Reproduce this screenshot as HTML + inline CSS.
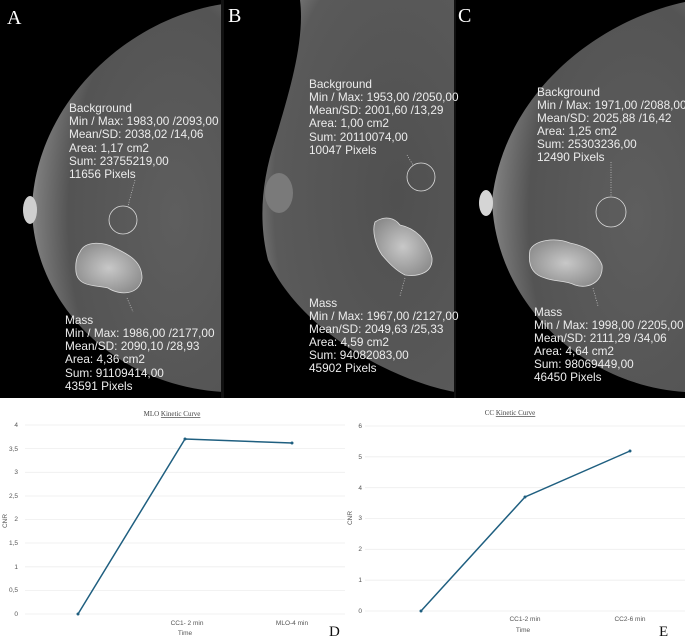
<!DOCTYPE html>
<html><head><meta charset="utf-8"><style>
html,body{margin:0;padding:0;background:#fff;width:685px;height:639px;overflow:hidden}
svg{display:block}
.t{font-family:"Liberation Sans",sans-serif;font-size:11.8px;fill:#ececec}
.ax{font-family:"Liberation Sans",sans-serif;font-size:6.5px;fill:#555}
.sr{font-family:"Liberation Serif",serif}
</style></head><body>
<svg width="685" height="639" viewBox="0 0 685 639" xmlns="http://www.w3.org/2000/svg">
<defs>
<radialGradient id="gA" cx="0.75" cy="0.55" r="0.8"><stop offset="0" stop-color="#5e5e5e"/><stop offset="0.7" stop-color="#545454"/><stop offset="0.9" stop-color="#7a7a7a"/><stop offset="1" stop-color="#a0a0a0"/></radialGradient>
<radialGradient id="gB" cx="0.7" cy="0.5" r="0.8"><stop offset="0" stop-color="#505050"/><stop offset="0.8" stop-color="#5a5a5a"/><stop offset="1" stop-color="#8a8a8a"/></radialGradient>
<radialGradient id="gM" cx="0.5" cy="0.5" r="0.6"><stop offset="0" stop-color="#c8c8c8"/><stop offset="1" stop-color="#8a8a8a"/></radialGradient>
</defs>
<rect x="0" y="0" width="685" height="398" fill="#000"/>
<!-- A -->
<path d="M223,4 C120,20 34,110 32,210 C34,300 110,385 223,392 Z" fill="url(#gA)"/>
<ellipse cx="30" cy="210" rx="7" ry="14" fill="#cfcfcf"/>
<rect x="221" y="0" width="3" height="398" fill="#111"/>
<!-- B -->
<path d="M300,0 L455,0 L455,392 C390,380 300,330 268,260 C258,220 262,180 275,140 C290,90 305,40 300,0 Z" fill="url(#gB)"/>
<ellipse cx="279" cy="193" rx="14" ry="20" fill="#7a7a7a"/>
<rect x="454" y="0" width="2" height="398" fill="#111"/>
<!-- C -->
<path d="M685,2 C600,20 505,90 492,200 C495,300 580,385 685,392 Z" fill="url(#gA)"/>
<ellipse cx="486" cy="203" rx="7" ry="13" fill="#d5d5d5"/>
<!-- ROIs -->
<g fill="none" stroke="#ddd" stroke-width="0.8">
<circle cx="123" cy="220" r="14"/>
<path d="M80,252 C85,240 105,242 115,248 C130,255 142,262 142,278 C140,295 120,296 108,288 C95,285 78,287 76,272 C75,262 77,256 80,252 Z" fill="url(#gM)"/>
<circle cx="421" cy="177" r="14"/>
<path d="M375,222 C385,215 395,218 400,225 C415,228 428,240 432,258 C433,272 420,277 405,275 C395,270 388,262 382,255 C375,245 372,230 375,222 Z" fill="url(#gM)"/>
<circle cx="611" cy="212" r="15"/>
<path d="M530,250 C535,240 555,237 570,243 C585,246 597,252 602,265 C604,280 590,290 575,285 C565,280 555,282 545,278 C530,274 528,262 530,250 Z" fill="url(#gM)"/>
</g>
<g stroke="#ccc" stroke-width="0.7" stroke-dasharray="1,1.5" fill="none">
<line x1="135" y1="180" x2="128" y2="206"/><line x1="127" y1="298" x2="133" y2="312"/>
<line x1="407" y1="155" x2="413" y2="165"/><line x1="405" y1="278" x2="400" y2="296"/>
<line x1="611" y1="162" x2="611" y2="197"/><line x1="593" y1="288" x2="598" y2="306"/>
</g>
<text class="sr" x="7" y="24" font-size="20" fill="#fff">A</text>
<text class="sr" x="228" y="22" font-size="20" fill="#fff">B</text>
<text class="sr" x="458" y="22" font-size="20" fill="#fff">C</text>
<g class="t">
<text x="69" y="112">Background</text><text x="69" y="125">Min / Max: 1983,00 /2093,00</text><text x="69" y="138">Mean/SD: 2038,02 /14,06</text><text x="69" y="152">Area: 1,17 cm2</text><text x="69" y="165">Sum: 23755219,00</text><text x="69" y="178">11656 Pixels</text>
<text x="65" y="324">Mass</text><text x="65" y="337">Min / Max: 1986,00 /2177,00</text><text x="65" y="350">Mean/SD: 2090,10 /28,93</text><text x="65" y="363">Area: 4,36 cm2</text><text x="65" y="377">Sum: 91109414,00</text><text x="65" y="390">43591 Pixels</text>
<text x="309" y="88">Background</text><text x="309" y="101">Min / Max: 1953,00 /2050,00</text><text x="309" y="114">Mean/SD: 2001,60 /13,29</text><text x="309" y="127">Area: 1,00 cm2</text><text x="309" y="141">Sum: 20110074,00</text><text x="309" y="154">10047 Pixels</text>
<text x="309" y="307">Mass</text><text x="309" y="320">Min / Max: 1967,00 /2127,00</text><text x="309" y="333">Mean/SD: 2049,63 /25,33</text><text x="309" y="346">Area: 4,59 cm2</text><text x="309" y="359">Sum: 94082083,00</text><text x="309" y="372">45902 Pixels</text>
<text x="537" y="96">Background</text><text x="537" y="109">Min / Max: 1971,00 /2088,00</text><text x="537" y="122">Mean/SD: 2025,88 /16,42</text><text x="537" y="135">Area: 1,25 cm2</text><text x="537" y="148">Sum: 25303236,00</text><text x="537" y="161">12490 Pixels</text>
<text x="534" y="316">Mass</text><text x="534" y="329">Min / Max: 1998,00 /2205,00</text><text x="534" y="342">Mean/SD: 2111,29 /34,06</text><text x="534" y="355">Area: 4,64 cm2</text><text x="534" y="368">Sum: 98069449,00</text><text x="534" y="381">46450 Pixels</text>
</g>
<!-- Chart D -->
<text class="sr" x="172" y="416" font-size="7" fill="#444" text-anchor="middle">MLO <tspan text-decoration="underline">Kinetic Curve</tspan></text>
<g stroke="#eee" stroke-width="0.8">
<line x1="25" y1="425" x2="345" y2="425"/><line x1="25" y1="448.6" x2="345" y2="448.6"/><line x1="25" y1="472.3" x2="345" y2="472.3"/><line x1="25" y1="496" x2="345" y2="496"/><line x1="25" y1="519.5" x2="345" y2="519.5"/><line x1="25" y1="543" x2="345" y2="543"/><line x1="25" y1="566.8" x2="345" y2="566.8"/><line x1="25" y1="590.4" x2="345" y2="590.4"/><line x1="25" y1="614" x2="345" y2="614"/>
</g>
<g class="ax" text-anchor="end">
<text x="18" y="427">4</text><text x="18" y="451">3,5</text><text x="18" y="474">3</text><text x="18" y="498">2,5</text><text x="18" y="521">2</text><text x="18" y="545">1,5</text><text x="18" y="569">1</text><text x="18" y="592">0,5</text><text x="18" y="616">0</text>
</g>
<text class="ax" transform="translate(7,521) rotate(-90)" text-anchor="middle">CNR</text>
<text class="ax" x="187" y="625" text-anchor="middle">CC1- 2 min</text>
<text class="ax" x="292" y="625" text-anchor="middle">MLO-4 min</text>
<text class="ax" x="185" y="635" text-anchor="middle">Time</text>
<polyline points="78,614 185,439 292,443" fill="none" stroke="#1f5f80" stroke-width="1.5"/>
<g fill="#1f5f80"><circle cx="78" cy="614" r="1.5"/><circle cx="185" cy="439" r="1.5"/><circle cx="292" cy="443" r="1.5"/></g>
<text class="sr" x="329" y="636" font-size="15" fill="#111">D</text>
<!-- Chart E -->
<text class="sr" x="510" y="415" font-size="7" fill="#444" text-anchor="middle">CC <tspan text-decoration="underline">Kinetic Curve</tspan></text>
<g stroke="#eee" stroke-width="0.8">
<line x1="365" y1="426" x2="685" y2="426"/><line x1="365" y1="456.8" x2="685" y2="456.8"/><line x1="365" y1="487.7" x2="685" y2="487.7"/><line x1="365" y1="518.5" x2="685" y2="518.5"/><line x1="365" y1="549.3" x2="685" y2="549.3"/><line x1="365" y1="580.2" x2="685" y2="580.2"/><line x1="365" y1="611" x2="685" y2="611"/>
</g>
<g class="ax" text-anchor="end">
<text x="362" y="428">6</text><text x="362" y="459">5</text><text x="362" y="490">4</text><text x="362" y="520">3</text><text x="362" y="551">2</text><text x="362" y="582">1</text><text x="362" y="613">0</text>
</g>
<text class="ax" transform="translate(352,518) rotate(-90)" text-anchor="middle">CNR</text>
<text class="ax" x="525" y="621" text-anchor="middle">CC1-2 min</text>
<text class="ax" x="630" y="621" text-anchor="middle">CC2-6 min</text>
<text class="ax" x="523" y="632" text-anchor="middle">Time</text>
<polyline points="421,611 525,497 630,451" fill="none" stroke="#1f5f80" stroke-width="1.5"/>
<g fill="#1f5f80"><circle cx="421" cy="611" r="1.5"/><circle cx="525" cy="497" r="1.5"/><circle cx="630" cy="451" r="1.5"/></g>
<text class="sr" x="659" y="636" font-size="15" fill="#111">E</text>
</svg>
</body></html>
